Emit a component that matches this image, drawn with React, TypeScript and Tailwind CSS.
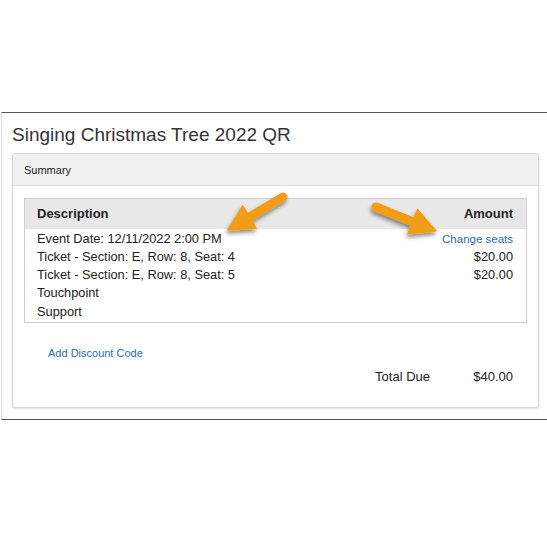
import React from "react";

function Arrow({ tail, tip }: { tail: [number, number]; tip: [number, number] }) {
  const dx = tip[0] - tail[0];
  const dy = tip[1] - tail[1];
  const len = Math.hypot(dx, dy);
  const ux = dx / len;
  const uy = dy / len;
  const hl = 25;
  const hw = 13;
  const bx = tip[0] - hl * ux;
  const by = tip[1] - hl * uy;
  const px = -uy;
  const py = ux;
  const w1 = [bx + hw * px, by + hw * py];
  const w2 = [bx - hw * px, by - hw * py];
  const sx = bx + 3 * ux;
  const sy = by + 3 * uy;
  return (
    <g>
      <line x1={tail[0]} y1={tail[1]} x2={sx} y2={sy} stroke="#F39C12" strokeWidth={9} strokeLinecap="round" />
      <polygon points={`${tip[0]},${tip[1]} ${w1[0]},${w1[1]} ${w2[0]},${w2[1]}`} fill="#F39C12" stroke="#F39C12" strokeWidth={1.5} strokeLinejoin="round" />
    </g>
  );
}

export default function App() {
  const rows: [string, React.ReactNode][] = [
    ["Event Date: 12/11/2022 2:00 PM", <span className="text-[11.5px] text-[#2d6bb5]">Change seats</span>],
    ["Ticket - Section: E, Row: 8, Seat: 4", "$20.00"],
    ["Ticket - Section: E, Row: 8, Seat: 5", "$20.00"],
    ["Touchpoint", ""],
    ["Support", ""],
  ];
  return (
    <div className="relative w-[547px] h-[547px] bg-white font-['Liberation_Sans',Arial,sans-serif] text-[#222] overflow-hidden">
      <div className="pt-[112px]">
        <div className="ml-[1px] border-t border-b border-[#555] border-l border-l-[#ddd]">
          <div className="pl-[10px] pt-[10px] pb-[6px] text-[19px] leading-[24px] text-[#333]">
            Singing Christmas Tree 2022 QR
          </div>
          <div className="ml-[10px] mb-[11px] w-[527px] border border-[#d6d6d6] rounded-[3px] shadow-[0_1px_2px_rgba(0,0,0,0.12)] bg-white">
            <div className="h-[32px] flex items-center pl-[11px] pt-[1px] bg-[#f1f1f1] border-b border-[#dcdcdc] text-[11px] rounded-t-[3px]">
              Summary
            </div>
            <div className="px-[11px] pt-[12px] pb-[21px]">
              <div className="border border-[#cfcfcf] pb-[1px]">
                <div className="h-[30px] bg-[#e8e8e8] flex items-center justify-between pl-[12px] pr-[13px] text-[13px] font-bold">
                  <span>Description</span>
                  <span>Amount</span>
                </div>
                <div className="pt-[0.5px]">
                  {rows.map(([d, a], i) => (
                    <div key={i} className="flex justify-between items-center pl-[12px] pr-[13px] text-[12.8px] leading-[18.3px] h-[18.3px]">
                      <span>{d}</span>
                      <span>{a}</span>
                    </div>
                  ))}
                </div>
              </div>
              <div className="mt-[24px] pl-[24px] text-[11px] leading-[13px] text-[#2d6bb5]">Add Discount Code</div>
              <div className="mt-[8px] flex justify-end pr-[14px] text-[13px] leading-[18px]">
                <span>Total Due</span>
                <span className="w-[83px] text-right">$40.00</span>
              </div>
            </div>
          </div>
        </div>
      </div>
      <svg className="absolute left-0 top-0 pointer-events-none" width={547} height={547}>
        <defs>
          <filter id="sh" x="-20%" y="-20%" width="140%" height="160%">
            <feDropShadow dx={-1} dy={3} stdDeviation={2} floodColor="#000" floodOpacity={0.45} />
          </filter>
        </defs>
        <g filter="url(#sh)">
          <Arrow tail={[283, 197]} tip={[228, 230]} />
          <Arrow tail={[376, 207]} tip={[436, 231]} />
        </g>
      </svg>
    </div>
  );
}
